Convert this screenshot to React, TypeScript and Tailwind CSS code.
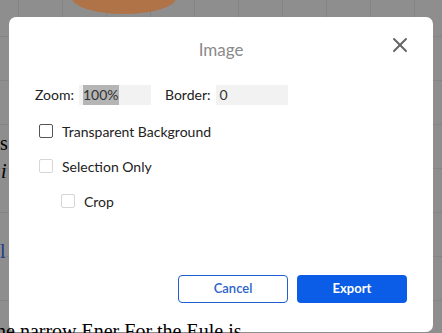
import { X } from 'lucide-react';

const font = { fontFamily: 'Lato, "Noto Sans", sans-serif' };

function Box({ disabled }: { disabled?: boolean }) {
  return (
    <span
      className={
        'w-[14px] h-[14px] rounded-[2px] border bg-white shrink-0 ' +
        (disabled ? 'border-[#d6d6d6] bg-[#f7f7f7]' : 'border-[#555]')
      }
    />
  );
}

export default function App() {
  return (
    <div className="relative w-[442px] h-[333px] overflow-hidden bg-[#8e8e8e]" style={font}>
      {/* page behind the overlay */}
      <div className="absolute inset-0 bg-[linear-gradient(to_right,#848484_1px,transparent_1px),linear-gradient(to_bottom,#848484_1px,transparent_1px)] bg-[size:44px_44px] bg-[position:18px_36px]" />
      <div className="absolute left-[72px] top-[-18px] w-[104px] h-[32px] rounded-[50%] bg-[#b3703f] opacity-90" />
      <div className="absolute left-0 top-[128px] text-[20px] text-black" style={{ fontFamily: '"Liberation Serif", serif' }}>s</div>
      <div className="absolute left-[1px] top-[156px] text-[20px] italic text-black" style={{ fontFamily: '"Liberation Serif", serif' }}>i</div>
      <div className="absolute left-0 top-[236px] text-[20px] text-[#1a3c8a]" style={{ fontFamily: '"Liberation Serif", serif' }}>l</div>

      {/* dialog */}
      <div className="absolute left-[9px] top-[17px] w-[424px] h-[315px] rounded-[7px] bg-white">
        <div className="relative flex justify-center pt-[21px] h-[62px]">
          <span className="text-[17px] leading-[24px] text-[#8a8a8a]">Image</span>
          <X className="absolute right-[21px] top-[16px] w-[24px] h-[24px] text-[#666]" strokeWidth={2} />
        </div>
        <div className="flex items-center mt-[5px] pl-[26px] text-[14px] text-[#222]">
          <span>Zoom:</span>
          <div className="ml-[5px] w-[72px] h-[20px] bg-[#f2f2f2] flex items-center pl-[4px]">
            <span className="bg-[#b5b5b5] text-[#333] leading-[20px]">100%</span>
          </div>
          <span className="ml-[14px]">Border:</span>
          <div className="ml-[5px] w-[72px] h-[20px] bg-[#f2f2f2] flex items-center pl-[4px] text-[#333]">0</div>
        </div>
        <div className="flex flex-col gap-[13px] mt-[15px] pl-[30px] text-[14px] text-[#222]">
          <label className="flex items-center gap-[9px] h-[22px]">
            <Box />
            <span>Transparent Background</span>
          </label>
          <label className="flex items-center gap-[9px] h-[22px]">
            <Box disabled />
            <span>Selection Only</span>
          </label>
          <label className="flex items-center gap-[9px] h-[22px] pl-[22px]">
            <Box disabled />
            <span>Crop</span>
          </label>
        </div>
        <div className="absolute right-[26px] bottom-[29px] flex gap-[9px]">
          <button className="w-[110px] h-[28px] rounded-[4px] border border-[#1f5fd1] text-[#2b63c9] text-[13px] font-semibold">Cancel</button>
          <button className="w-[110px] h-[28px] rounded-[4px] bg-[#0b5ce6] text-white text-[13px] font-bold">Export</button>
        </div>
      </div>
      <div className="absolute left-[-4px] top-[316px] text-[20px] text-black whitespace-nowrap" style={{ fontFamily: '"Liberation Serif", serif' }}>
        he narrow Ener For the Eule is
      </div>
    </div>
  );
}
